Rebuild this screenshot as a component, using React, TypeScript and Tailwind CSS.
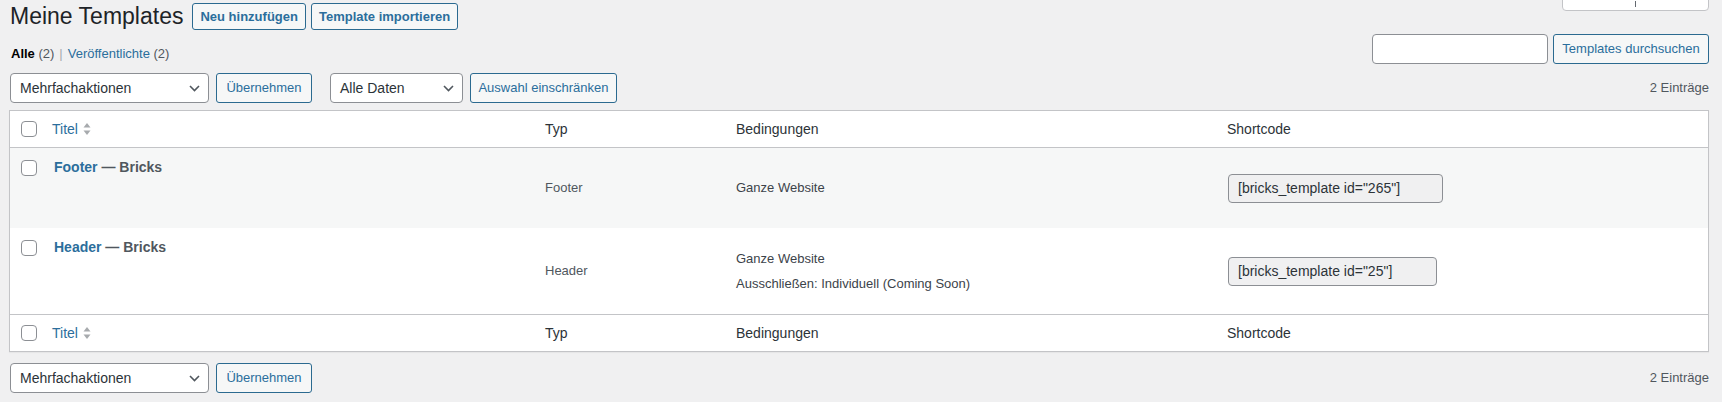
const link = 'text-[#2b6e9c]';

function Chevron() {
  return (
    <svg width="11" height="7" viewBox="0 0 11 7" fill="none" className="shrink-0">
      <path d="M1 1l4.5 4.5L10 1" stroke="#50575e" strokeWidth="1.6" />
    </svg>
  );
}

function Select({ label, width }: { label: string; width: string }) {
  return (
    <div
      className={`flex h-[30px] items-center justify-between rounded-[4px] border border-[#8c8f94] bg-white pl-[9px] pr-[8px] text-[14px] text-[#2c3338] ${width}`}
    >
      <span>{label}</span>
      <Chevron />
    </div>
  );
}

function Button({ children, className = '' }: { children: React.ReactNode; className?: string }) {
  return (
    <button
      className={`flex h-[30px] items-center whitespace-nowrap rounded-[3px] border border-[#2b6a90] bg-[#f6f7f7] px-[6px] text-[13px] ${link} ${className}`}
    >
      {children}
    </button>
  );
}

function Checkbox() {
  return <span className="block h-[16px] w-[16px] rounded-[4px] border border-[#8c8f94] bg-white" />;
}

function SortArrows() {
  return (
    <svg width="8" height="14" viewBox="0 0 8 14" className="ml-[5px]">
      <path d="M4 1l3.5 4.5h-7z" fill="#a7aaad" />
      <path d="M4 13L0.5 8.5h7z" fill="#a7aaad" />
    </svg>
  );
}

const cols = 'grid grid-cols-[32px_493px_191px_491px_1fr]';

function HeadRow({ className }: { className: string }) {
  return (
    <div className={`${cols} ${className} items-center text-[14px] text-[#2c3338]`}>
      <div className="pl-[11px]">
        <Checkbox />
      </div>
      <div className="flex items-center pl-[10px]">
        <span className={link}>Titel</span>
        <SortArrows />
      </div>
      <div className="pl-[10px]">Typ</div>
      <div className="pl-[10px]">Bedingungen</div>
      <div className="pl-[10px]">Shortcode</div>
    </div>
  );
}

function Row({
  title,
  type,
  conditions,
  shortcode,
  inputWidth,
  className,
}: {
  title: string;
  type: string;
  conditions: string[];
  shortcode: string;
  inputWidth: string;
  className: string;
}) {
  return (
    <div className={`${cols} ${className}`}>
      <div className="pl-[11px] pt-[12px]">
        <Checkbox />
      </div>
      <div className="pl-[12px] pt-[9px] text-[14px] leading-[20px] font-bold">
        <span className={link}>{title}</span>
        <span className="text-[#50575e]"> — Bricks</span>
      </div>
      <div className="self-center pl-[10px] text-[#50575e]">{type}</div>
      <div className="flex flex-col gap-[6px] self-center pl-[10px] text-[#3c434a]">
        {conditions.map((c) => (
          <span key={c}>{c}</span>
        ))}
      </div>
      <div className="self-center pl-[11px]">
        <div
          className={`flex h-[29px] items-center rounded-[4px] border border-[#8c8f94] bg-[#f0f0f1] px-[9px] text-[14px] text-[#2c3338] ${inputWidth}`}
        >
          {shortcode}
        </div>
      </div>
    </div>
  );
}

export default function App() {
  return (
    <div className="h-[402px] w-[1722px] overflow-hidden bg-[#f0f0f1] pl-[9px] pr-[13px] font-['Liberation_Sans',Arial,sans-serif] text-[13px] text-[#3c434a]">
      {/* title row */}
      <div className="flex h-[34px] items-start justify-between">
        <div className="flex items-center gap-[5px] pt-[3px]">
          <h1 className="mr-[4px] pl-[1px] text-[23px] leading-[27px] text-[#1d2327]">Meine Templates</h1>
          <button className={`h-[27px] whitespace-nowrap rounded-[3px] border border-[#2b6a90] bg-[#f6f7f7] px-[7px] text-[13px] font-semibold ${link}`}>
            Neu hinzufügen
          </button>
          <button className={`h-[27px] whitespace-nowrap rounded-[3px] border border-[#2b6a90] bg-[#f6f7f7] px-[7px] text-[13px] font-semibold ${link}`}>
            Template importieren
          </button>
        </div>
        {/* screen options tab, scrolled mostly out of view */}
        <div className="h-[11px] overflow-hidden">
          <div className="-mt-[20px] flex h-[31px] w-[147px] items-end justify-center rounded-b-[4px] border border-[#c3c4c7] bg-white pb-[3px]">
            <span className="h-[6px] w-[1px] bg-[#646970]" />
          </div>
        </div>
      </div>

      {/* views + search */}
      <div className="flex h-[30px] items-end justify-between">
        <div className="pb-[1px] pl-[2px] text-[13px]">
          <span className="font-semibold text-black">Alle</span>
          <span className="text-[#50575e]"> (2)</span>
          <span className="px-[5px] text-[#a7aaad]">|</span>
          <span className={link}>Veröffentlichte</span>
          <span className="text-[#50575e]"> (2)</span>
        </div>
        <div className="flex items-center gap-[5px]">
          <div className="h-[30px] w-[176px] rounded-[4px] border border-[#8c8f94] bg-white" />
          <Button className="w-[156px] justify-center">Templates durchsuchen</Button>
        </div>
      </div>

      {/* bulk actions */}
      <div className="mt-[9px] flex items-center justify-between pl-[1px]">
        <div className="flex items-center">
          <Select label="Mehrfachaktionen" width="w-[199px]" />
          <Button className="ml-[7px] w-[96px] justify-center">Übernehmen</Button>
          <Select label="Alle Daten" width="ml-[18px] w-[133px]" />
          <Button className="ml-[7px] w-[147px] justify-center">Auswahl einschränken</Button>
        </div>
        <span className="text-[13px] text-[#50575e]">2 Einträge</span>
      </div>

      {/* table */}
      <div className="mt-[7px] border border-[#c3c4c7] bg-white shadow-[0_1px_1px_rgba(0,0,0,0.04)]">
        <HeadRow className="h-[37px] border-b border-[#c3c4c7]" />
        <Row
          title="Footer"
          type="Footer"
          conditions={['Ganze Website']}
          shortcode={'[bricks_template id="265"]'}
          inputWidth="w-[215px]"
          className="h-[80px] bg-[#f6f7f7]"
        />
        <Row
          title="Header"
          type="Header"
          conditions={['Ganze Website', 'Ausschließen: Individuell (Coming Soon)']}
          shortcode={'[bricks_template id="25"]'}
          inputWidth="w-[209px]"
          className="h-[86px] bg-white"
        />
        <HeadRow className="h-[37px] border-t border-[#c3c4c7]" />
      </div>

      {/* bottom bulk actions */}
      <div className="mt-[11px] flex items-center justify-between pl-[1px]">
        <div className="flex items-center">
          <Select label="Mehrfachaktionen" width="w-[199px]" />
          <Button className="ml-[7px] w-[96px] justify-center">Übernehmen</Button>
        </div>
        <span className="text-[13px] text-[#50575e]">2 Einträge</span>
      </div>
    </div>
  );
}
